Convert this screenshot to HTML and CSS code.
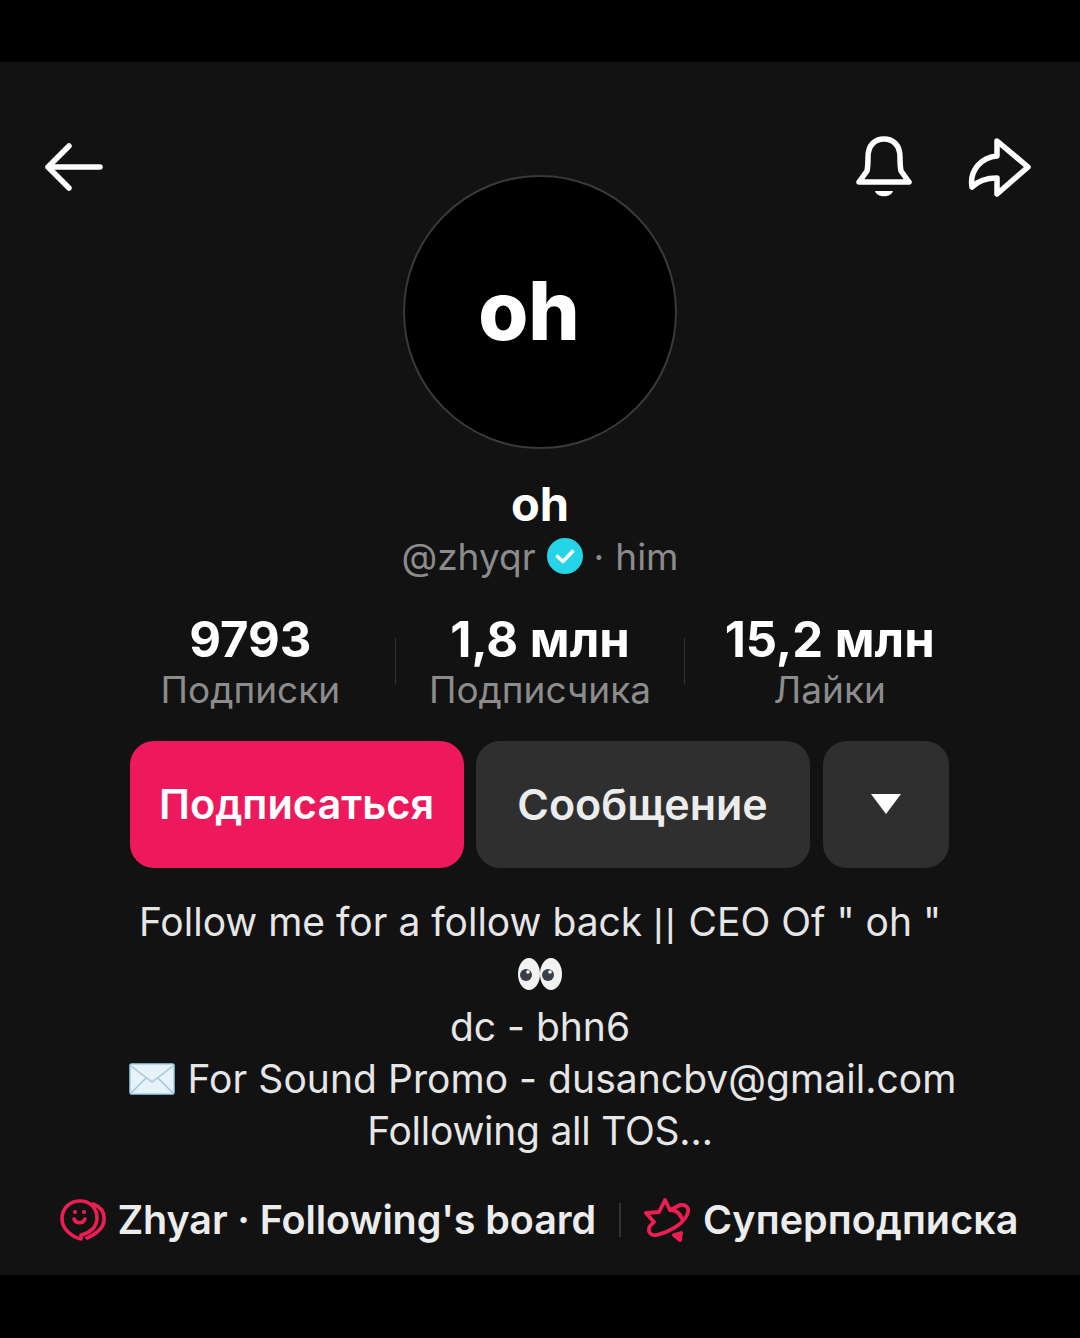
FILE: index.html
```html
<!DOCTYPE html>
<html lang="en">
<head>
    <meta charset="UTF-8">
    <meta name="viewport" content="width=device-width, initial-scale=1.0">
    <title>oh - profile</title>
    <link rel="stylesheet" href="styles.css">
</head>
<body>
<div class="screen">
    <!-- Top bar -->
    <div class="topbar">
        <svg class="icon-back" width="60" height="52" viewBox="0 0 60 52" fill="none" stroke="#fff" stroke-width="5.5" stroke-linecap="round" stroke-linejoin="round">
            <path d="M25 5 L4 26 L25 47 M4 26 H56"/>
        </svg>
        <div class="topbar-right">
            <svg width="58" height="64" viewBox="0 0 58 64" fill="none" stroke="#fff" stroke-width="5.5" stroke-linecap="round" stroke-linejoin="round">
                <path d="M4 47 L12 36 C13 31 13 27 13 22 C13 10 20 4 29 4 C38 4 45 10 45 22 C45 27 45 31 46 36 L54 47 Z"/>
                <path d="M20 56 H38 C36 63 22 63 20 56 Z" fill="#fff" stroke="none"/>
            </svg>
            <svg width="66" height="60" viewBox="0 0 66 60" fill="none" stroke="#fff" stroke-width="5.5" stroke-linecap="round" stroke-linejoin="round">
                <path d="M31 4 L62 30 L31 57 V41 C20 41 12 44 6 50 C3 32 17 20 31 19 Z"/>
            </svg>
        </div>
    </div>

    <!-- Avatar and names -->
    <div class="avatar"><span>oh</span></div>
    <h1 class="name">oh</h1>
    <div class="handle">
        <span>@zhyqr</span>
        <svg class="badge" width="36" height="36" viewBox="0 0 36 36">
            <circle cx="18" cy="18" r="18" fill="#25d4e6"/>
            <path d="M10.5 18.5 L16 23.5 L25.5 13.5" fill="none" stroke="#fff" stroke-width="3.6" stroke-linecap="round" stroke-linejoin="round"/>
        </svg>
        <span class="dot">·</span>
        <span>him</span>
    </div>

    <!-- Stats -->
    <div class="stats">
        <div class="stat">
            <div class="stat-num">9793</div>
            <div class="stat-label">Подписки</div>
        </div>
        <div class="stat-line"></div>
        <div class="stat">
            <div class="stat-num">1,8 млн</div>
            <div class="stat-label">Подписчика</div>
        </div>
        <div class="stat-line"></div>
        <div class="stat">
            <div class="stat-num">15,2 млн</div>
            <div class="stat-label">Лайки</div>
        </div>
    </div>

    <!-- Buttons -->
    <div class="actions">
        <button class="btn btn-follow">Подписаться</button>
        <button class="btn btn-message">Сообщение</button>
        <button class="btn btn-more"><span class="triangle"></span></button>
    </div>

    <!-- Bio -->
    <div class="bio">
        <div>Follow me for a follow back <span class="bars">||</span> CEO Of " oh "</div>
        <div class="bio-row">
            <svg width="46" height="34" viewBox="0 0 46 34">
                <ellipse cx="12" cy="17" rx="11" ry="16" fill="#f2f2f2"/>
                <ellipse cx="34" cy="17" rx="11" ry="16" fill="#f2f2f2"/>
                <circle cx="9" cy="18" r="6" fill="#3a3f46"/>
                <circle cx="31" cy="18" r="6" fill="#3a3f46"/>
                <circle cx="11" cy="15" r="1.8" fill="#fff"/>
                <circle cx="33" cy="15" r="1.8" fill="#fff"/>
            </svg>
        </div>
        <div>dc - bhn6</div>
        <div class="bio-row bio-mail">
            <svg class="mail" width="46" height="32" viewBox="0 0 46 32">
                <rect x="1" y="1" width="44" height="30" rx="1.5" fill="#e6f3fa" stroke="#9fd2ea" stroke-width="1.5"/>
                <path d="M2 3 L23 19 L44 3 M2 30 L17 15 M44 30 L29 15" fill="none" stroke="#a9c6d8" stroke-width="1.5"/>
            </svg>
            <span>For Sound Promo - dusancbv@gmail.com</span>
        </div>
        <div class="bio-last">Following all TOS…</div>
    </div>

    <!-- Bottom links -->
    <div class="links">
        <div class="link link-board">
            <svg width="46" height="42" viewBox="0 0 46 42" fill="none" stroke="#ee1d52" stroke-width="3.6" stroke-linecap="round" stroke-linejoin="round">
                <path d="M21 36 L21 40 C12 38 2 30 2 20 C2 9 10 2 20 2 C30 2 37 9 37 19 C37 28 30 34 21 36 Z"/>
                <path d="M33 5 C41 8 45 14 44 22 C43 30 36 35 27 39"/>
                <path d="M14 20 C16 25 23 25 25 20"/>
                <circle cx="15" cy="13" r="1.4" fill="#ee1d52" stroke-width="1.4"/>
                <circle cx="24" cy="13" r="1.4" fill="#ee1d52" stroke-width="1.4"/>
            </svg>
            <span>Zhyar · Following's board</span>
        </div>
        <div class="link-line"></div>
        <div class="link link-super">
            <svg width="46" height="44" viewBox="0 0 46 44" fill="none" stroke="#ee1d52" stroke-width="3.8" stroke-linecap="round" stroke-linejoin="round">
                <path d="M21 2 L26 12 L36 7 C43 6 46 11 43 17 C38 27 25 34 13 37 C6 38 3 33 6 28 L10 24 L2 15 L15 14 Z"/>
                <path d="M26 12 C32 12 36 15 38 21"/>
                <path d="M30 37 L37 35 L36 42 Z" fill="#ee1d52"/>
            </svg>
            <span>Суперподписка</span>
        </div>
    </div>
</div>
</body>
</html>
```

FILE: styles.css
```css
* {
    box-sizing: border-box;
}
html, body {
    margin: 0;
    background-color: #000;
}
body {
    font-family: Inter, "Liberation Sans", Arial, sans-serif;
    width: 1080px;
    height: 1338px;
    padding: 62px 0 63px;
    overflow: hidden;
}
.screen {
    height: 1213px;
    background-color: #121212;
    color: #fff;
    display: flex;
    flex-direction: column;
    align-items: center;
    padding-top: 73px;
}

/* top bar */
.topbar {
    width: 100%;
    height: 64px;
    margin-bottom: -24px;
    padding: 0 48px 0 44px;
    display: flex;
    justify-content: space-between;
    align-items: center;
}
.topbar-right {
    display: flex;
    align-items: center;
    gap: 53px;
}

/* avatar */
.avatar {
    width: 274px;
    height: 274px;
    border-radius: 50%;
    background-color: #000;
    border: 2px solid #3a3a3a;
    display: flex;
    align-items: center;
    justify-content: center;
    flex-shrink: 0;
}
.avatar span {
    font-size: 81px;
    font-weight: 800;
    margin: -2px 22px 0 0;
}
.name {
    margin: 26px 0 0;
    font-size: 47px;
    line-height: 58px;
    font-weight: 700;
}
.handle {
    display: flex;
    align-items: center;
    height: 46px;
    font-size: 37px;
    color: #8c8c8c;
    gap: 11px;
}

/* stats */
.stats {
    display: flex;
    align-items: center;
    margin-top: 32px;
    width: 868px;
}
.stat {
    flex: 1;
    text-align: center;
}
.stat-num {
    font-size: 49px;
    line-height: 58px;
    font-weight: 700;
}
.stat-label {
    font-size: 37px;
    line-height: 42px;
    color: #8c8c8c;
}
.stat-line {
    width: 1px;
    height: 46px;
    background-color: #333;
}

/* buttons */
.actions {
    display: flex;
    gap: 12px;
    margin-top: 30px;
    margin-right: 2px;
}
.btn {
    height: 127px;
    border: none;
    border-radius: 24px;
    color: #fff;
    font-family: inherit;
    font-weight: 600;
    background-color: #2f2f2f;
    padding: 0 0 2px;
}
.btn-follow {
    width: 334px;
    font-size: 41.5px;
    background-color: #ed195c;
}
.btn-message {
    width: 334px;
    font-size: 43px;
    color: #ececec;
}
.btn-more {
    width: 126px;
    margin-left: 1px;
    display: flex;
    align-items: center;
    justify-content: center;
}
.triangle {
    width: 0;
    height: 0;
    border-left: 15px solid transparent;
    border-right: 15px solid transparent;
    border-top: 20px solid #fff;
}

/* bio */
.bio {
    margin-top: 28px;
    font-size: 39px;
    line-height: 52.3px;
    text-align: center;
    color: #e6e6e6;
}
.bars {
    font-family: "Liberation Sans", Arial, sans-serif;
    line-height: 1;
    letter-spacing: 2px;
}
.bio-row {
    display: flex;
    align-items: center;
    justify-content: center;
    gap: 13px;
    height: 52.3px;
}
.bio-mail {
    padding-left: 5px;
    letter-spacing: 0.05px;
}
.bio-last {
    letter-spacing: -0.25px;
}

/* bottom links */
.links {
    display: flex;
    align-items: center;
    margin: 39px 1px 0 0;
    font-size: 39.5px;
    font-weight: 600;
    color: #ececec;
}
.link {
    display: flex;
    align-items: center;
    gap: 13px;
}
.link-board {
    gap: 11px;
    letter-spacing: -0.1px;
}
.link-super {
    letter-spacing: 0.08px;
}
.link-line {
    width: 2px;
    height: 34px;
    background-color: #333;
    margin: 0 23px;
}
```
